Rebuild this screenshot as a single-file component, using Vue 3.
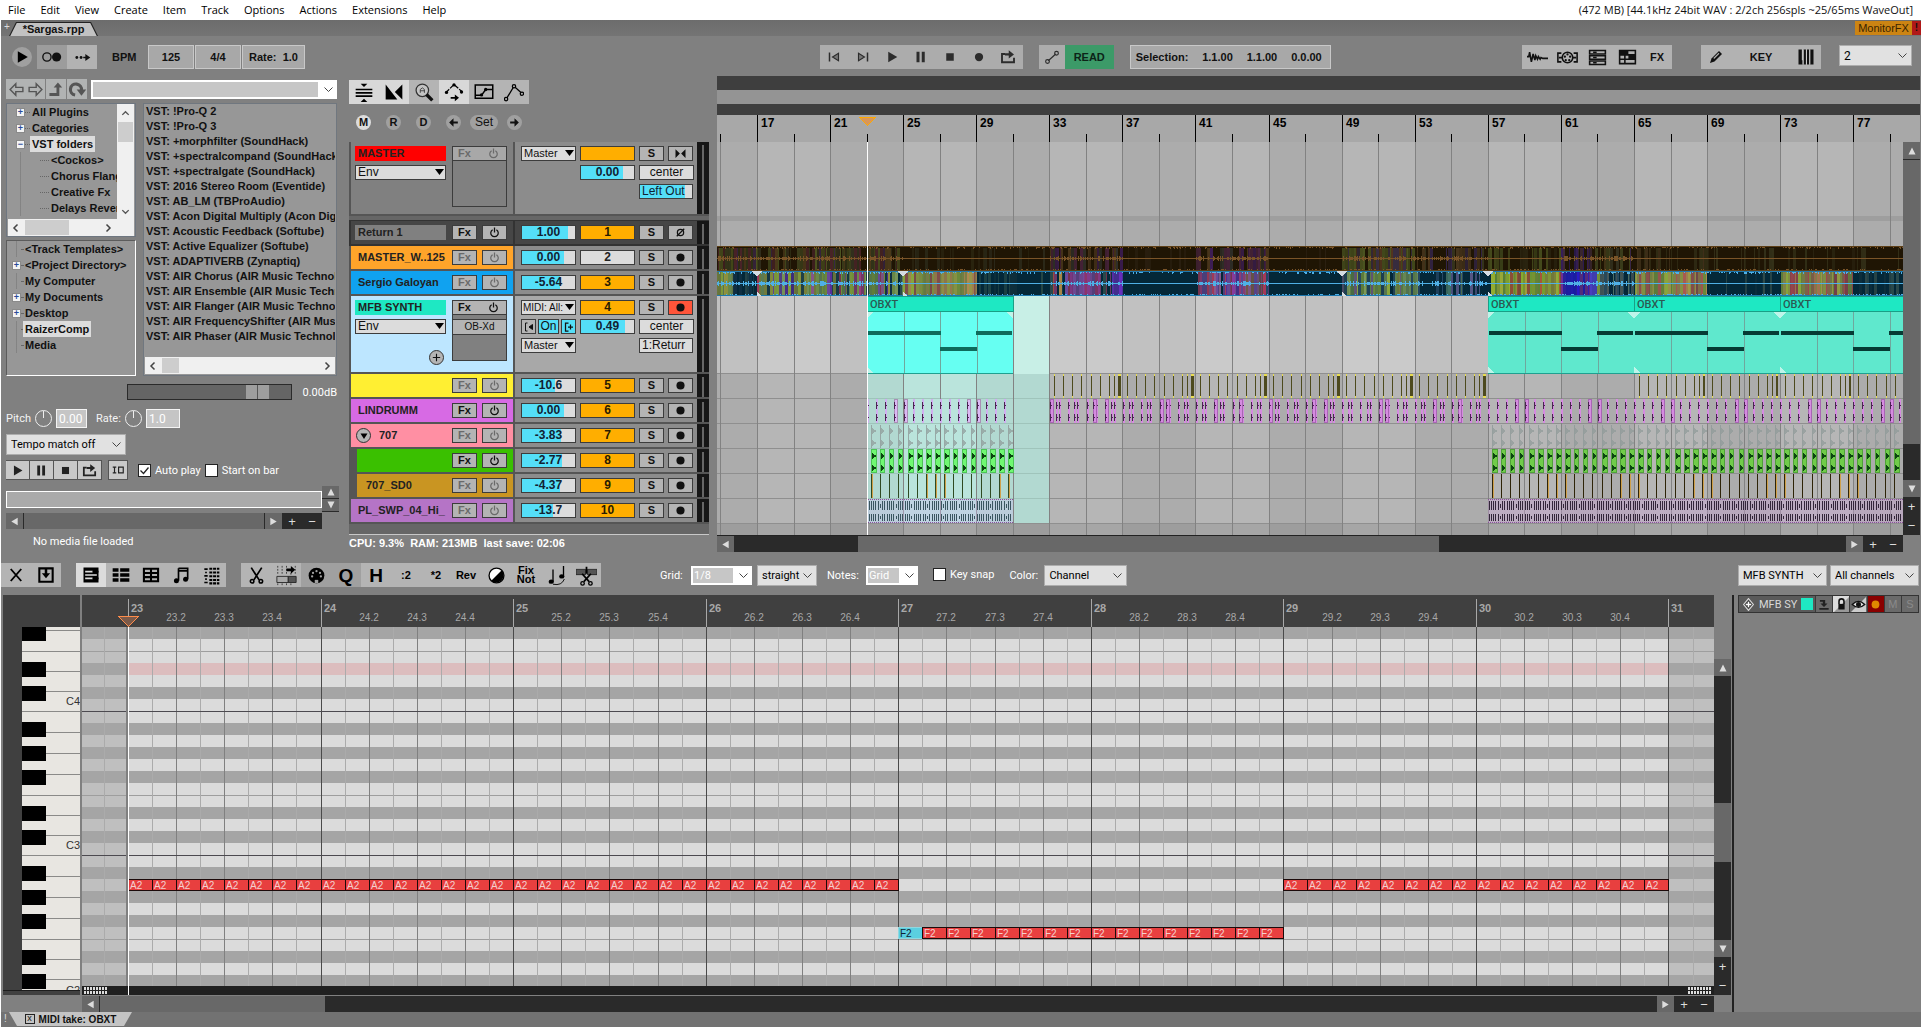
<script setup>
import { h, ref } from 'vue'

/* ---------- icons ---------- */
const icons = {
  play: '<path d="M7 5l12 7-12 7z"/>',
  pause: '<path d="M6 5h4v14H6zM13 5h4v14h-4z"/>',
  stop: '<path d="M7 7h10v10H7z"/>',
  rec: '<circle cx="12" cy="12" r="5.500"/>',
  start: '<path d="M5 6h2v12H5z"/><path d="M18 7v10l-8-5z" fill="#777" stroke="currentColor" stroke-width="1.500"/>',
  end: '<path d="M17 6h2v12h-2z"/><path d="M6 7v10l8-5z" fill="#777" stroke="currentColor" stroke-width="1.500"/>',
  loop: '<path d="M8 8H4v11h16v-6" fill="none" stroke="currentColor" stroke-width="2.500"/><path d="M8 7h5V3l7 5.500-7 5.500v-4H8z"/>',
  link: '<circle cx="6.500" cy="12" r="4.500" fill="none" stroke="currentColor" stroke-width="1.500"/><circle cx="17" cy="12" r="5"/>',
  dots: '<circle cx="4" cy="12" r="2"/><circle cx="10" cy="12" r="2"/><path d="M13 11h3V7l7 5-7 5v-4h-3z"/>',
  node: '<path d="M7 17L17 8" stroke="currentColor" stroke-width="1.500"/><circle cx="6" cy="18" r="2.500" fill="none" stroke="currentColor" stroke-width="1.500"/><circle cx="18" cy="7" r="2.500" fill="none" stroke="currentColor" stroke-width="1.500"/>',
  wave: '<path d="M0 11h2l1-5 2 11 2-9 2 7 1-5 2 4 1-3 2 3 1-2 2 1h6" fill="none" stroke="currentColor" stroke-width="1.800"/>',
  router: '<circle cx="12" cy="12" r="6" fill="none" stroke="currentColor" stroke-width="1.800"/><path d="M5 7H1v10h4M19 7h4v10h-4" fill="none" stroke="currentColor" stroke-width="1.800"/><circle cx="12" cy="8.500" r="1.300"/><circle cx="9" cy="11" r="1.300"/><circle cx="15" cy="11" r="1.300"/><circle cx="10" cy="15" r="1.300"/><circle cx="14" cy="15" r="1.300"/><path d="M2 12h4M18 12h4" stroke="currentColor" stroke-width="2"/>',
  rows: '<path d="M3 4h18v4H3zM3 10h18v4H3zM3 16h18v4H3z" fill="none" stroke="currentColor" stroke-width="1.800"/><path d="M7 6h4M7 12h4M7 18h4" stroke="currentColor" stroke-width="1.500"/>',
  matrix: '<path d="M3 4h18v15H3zM3 9h18M3 14h18M9 9v10" fill="none" stroke="currentColor" stroke-width="1.800"/><path d="M3 4h10v5H3zM13 9h8v5h-8z"/>',
  pencil: '<path d="M4 20l2-6L16 4l4 4L10 18z"/><path d="M9 14l7-7" stroke="#b2b2b2" stroke-width="1.500"/>',
  piano: '<path d="M3 3h4v13h1v5H3zM9 3h3v18H9zM13 3h3v18h-3zM17 3h4v18h-4z"/><path d="M8.500 3v18M12.500 3v18M16.500 3v18" stroke="#ddd" stroke-width="1"/>',
  power: '<path d="M9 7.500a6 6 0 1 0 6 0M12 4v8" fill="none" stroke="currentColor" stroke-width="2"/>',
  phase: '<circle cx="12" cy="12" r="5" fill="none" stroke="currentColor" stroke-width="2"/><path d="M6 18L18 6" stroke="currentColor" stroke-width="2"/>',
  mono: '<path d="M4 5l7 7-7 7zM20 5l-7 7 7 7z"/>',
  dot: '<circle cx="12" cy="12" r="6.500"/>',
  ripple: '<path d="M2 8h20v2H2zM2 12h20v2H2zM2 16h20v2H2zM8 2h8l-4 4zM8 24h8l-4-4z"/>',
  cross: '<path d="M2 3v18h14zM22 3v18L13 12z"/>',
  zoomA: '<circle cx="10" cy="10" r="7.500" fill="#c4c4c4" stroke="#333" stroke-width="1.500"/><path d="M15 15L22 22" stroke="#111" stroke-width="4"/><path d="M7.500 13V9l2.500-2 2.500 2v4M7.500 10.500h5" fill="none" stroke="#333"/>',
  envMove: '<path d="M2 13l10-10 10 9" fill="none" stroke="currentColor" stroke-width="1.500" stroke-dasharray="6 1.500"/><circle cx="3" cy="12.500" r="2"/><circle cx="12" cy="3.500" r="2"/><circle cx="21" cy="12" r="2"/><path d="M8 18h5v-3l5 4-5 4v-3H8z"/>',
  envBox: '<path d="M1.500 3.500h21v16h-21zM2 16h7l5-7h8" fill="none" stroke="currentColor" stroke-width="1.800"/><circle cx="9" cy="15.500" r="2"/><circle cx="14" cy="9" r="2"/>',
  envLine: '<path d="M3 20l9-15 10 9" fill="none" stroke="currentColor" stroke-width="1.500"/><g fill="#b4b4b4" stroke="currentColor" stroke-width="1.500"><circle cx="2.500" cy="20.500" r="2"/><circle cx="12" cy="5" r="2"/><circle cx="21.500" cy="14" r="2"/></g>',
  left: '<path d="M12 4v6h8v4h-8v6L4 12z"/>',
  right: '<path d="M12 4v6H4v4h8v6l8-8z"/>',
  back: '<path d="M11 4v5h10v6H11v5l-8-8z" fill="none" stroke="currentColor" stroke-width="2"/>',
  fwd: '<path d="M13 4v5H3v6h10v5l8-8z" fill="none" stroke="currentColor" stroke-width="2"/>',
  up: '<path d="M2 17h10V9H8l6-7 6 7h-4v12H2z"/>',
  refresh: '<path d="M9 19a7 7 0 1 1 8-6" fill="none" stroke="currentColor" stroke-width="4"/><path d="M11 12h12l-6 8z"/>',
  plus: '<path d="M12 4v16M4 12h16" stroke="currentColor" stroke-width="2.500"/>',
  down: '<path d="M5 7h14l-7 11z"/>',
  close: '<path d="M5 4l14 16M19 4L5 20" stroke="currentColor" stroke-width="2.500"/>',
  dock: '<path d="M4 4h16v16H4z" fill="none" stroke="currentColor" stroke-width="2.500"/><path d="M10.500 4h3v6H17l-5 6-5-6h3.500z"/>',
  list1: '<path d="M3 3h18v18H3z"/><path d="M5 7h9v2H5zM5 11h14v2H5zM5 15h9v2H5z" fill="#dcdcdc"/><path d="M14 7h7v2h-7zM14 15h7v2h-7z"/>',
  list2: '<path d="M2 4h7v4H2zM11 4h11v4H11zM2 10h7v4H2zM11 10h11v4H11zM2 16h7v4H2zM11 16h11v4H11z"/>',
  table: '<path d="M3.500 4.500h17v15h-17zM4 9.500h16M4 14.500h16M12 5v14" fill="none" stroke="currentColor" stroke-width="2.500"/>',
  notes: '<path d="M9 4h11v13M9 4v15M9 7h11" fill="none" stroke="currentColor" stroke-width="2"/><circle cx="6.500" cy="19" r="3"/><circle cx="17.500" cy="17" r="3"/>',
  drums: '<path d="M4 4h4v2H4zM4 12h4v2H4zM4 20h4v2H4zM5 8h2v2H5zM5 16h2v2H5z"/><path d="M10 4.500h12M10 9h12M10 13.500h12M10 18h12M10 22h12" stroke="currentColor" stroke-width="2.500" stroke-dasharray="3.500 1"/>',
  cut: '<path d="M6 3l9 14M18 3L9 17" stroke="currentColor" stroke-width="2"/><circle cx="7" cy="18.500" r="2" fill="none" stroke="currentColor" stroke-width="1.800"/><circle cx="17" cy="18.500" r="2" fill="none" stroke="currentColor" stroke-width="1.800"/>',
  quant: '<path d="M1 13h13v7H1z" fill="#aaa" stroke="#222"/><path d="M14 13h9v7h-9z" fill="#555" stroke="#222"/><path d="M2 1v9M7 1v9M12 1v9M17 9v3M22 1v9M2 21v3M7 21v3M12 21v3M17 21v3" stroke="#333" stroke-dasharray="2 1.500"/><path d="M12 4h5V1l5 4.500-5 4.500V7h-5z"/>',
  midi: '<circle cx="12" cy="12" r="9"/><g fill="#a0a0a0"><circle cx="12" cy="7" r="1.300"/><circle cx="8" cy="9" r="1.300"/><circle cx="16" cy="9" r="1.300"/><circle cx="7" cy="13" r="1.300"/><circle cx="17" cy="13" r="1.300"/><path d="M10 17h4v4h-4z"/></g>',
  half: '<circle cx="12" cy="12" r="8.500" fill="#fff" stroke="#000" stroke-width="1.500"/><path d="M6 18A8.500 8.500 0 0 0 18 6z"/>',
  legato: '<path d="M8 5v14M20 1v12" stroke="currentColor" stroke-width="1.500"/><ellipse cx="6" cy="19" rx="3" ry="2.500"/><ellipse cx="18" cy="13" rx="3" ry="2.500"/><path d="M8 22q10 2 13-6" fill="none" stroke="currentColor"/>',
  split: '<path d="M0 5h11v6H0zM13 5h11v6H13z" fill="#555" stroke="#222"/><path d="M7 10l8 9M17 10l-8 9M12 2v8" stroke="currentColor" stroke-width="2"/><circle cx="7.500" cy="21" r="2" fill="none" stroke="currentColor" stroke-width="1.500"/><circle cx="16.500" cy="21" r="2" fill="none" stroke="currentColor" stroke-width="1.500"/>',
  diamond: '<path d="M12 1l9 11-9 11L3 12z" fill="#444" stroke="#ddd" stroke-width="2"/><path d="M12 7v10M7 12h10" stroke="#fff" stroke-width="2.500"/>',
  into: '<path d="M5 5h9v6h4l-6 6-6-6h4V8H5zM4 19h16v3H4z" fill="#222"/>',
  lock: '<path d="M24 0v24H0z" fill="#999"/><path d="M8 11V7a4 4 0 0 1 8 0v4" fill="none" stroke="#111" stroke-width="2.500"/><path d="M7 11h10v9H7z" fill="#111"/>',
  eye: '<path d="M24 0v24H0z" fill="#ccc"/><path d="M2 12q10-10 20 0-10 9-20 0z" fill="#ddd" stroke="#111" stroke-width="2"/><circle cx="12" cy="12" r="4" fill="#111"/>',
  inp: '<path d="M9 4H5v16h4M19 7l-7 5 7 5z" fill="none" stroke="currentColor" stroke-width="2"/><path d="M19 7l-7 5 7 5z"/>',
  outp: '<path d="M11 4H5v16h6M10 12h10M15 7v10" fill="none" stroke="currentColor" stroke-width="2.500"/>',
  io: '<path d="M3 7h6M6 7v10M3 17h6M13 7h8v10h-8z" fill="none" stroke="currentColor" stroke-width="2"/>',
  tri: '<path d="M12 5l7 14H5z"/>',
  tridn: '<path d="M12 19L5 5h14z"/>',
  tril: '<path d="M5 12l14-8v16z"/>',
  trir: '<path d="M19 12L5 4v16z"/>',
  chu: '<path d="M5 15l7-7 7 7" fill="none" stroke="currentColor" stroke-width="3"/>',
  chd: '<path d="M5 9l7 7 7-7" fill="none" stroke="currentColor" stroke-width="3"/>',
  chl: '<path d="M15 5l-7 7 7 7" fill="none" stroke="currentColor" stroke-width="3"/>',
  chr: '<path d="M9 5l7 7-7 7" fill="none" stroke="currentColor" stroke-width="3"/>'
}
const Icon = (p) => h('svg', {
  viewBox: '0 0 24 24', width: p.s || 18, height: p.s || 18, fill: 'currentColor',
  'aria-hidden': 'true', class: 'icon', innerHTML: icons[p.n]
})
Icon.props = ['n', 's']

/* ---------- menus and browser ---------- */
const menu = ['File', 'Edit', 'View', 'Create', 'Item', 'Track', 'Options', 'Actions', 'Extensions', 'Help']
const transport = ['start', 'end', 'play', 'pause', 'stop', 'rec', 'loop']
const tree1 = [
  { t: 'All Plugins', b: '+' }, { t: 'Categories', b: '+' }, { t: 'VST folders', b: '-', sel: true },
  { t: '<Cockos>', sub: true }, { t: 'Chorus Flanger', sub: true }, { t: 'Creative Fx', sub: true }, { t: 'Delays Reverbs', sub: true }
]
const tree2 = [
  { t: '<Track Templates>' }, { t: '<Project Directory>', b: '+' }, { t: 'My Computer' },
  { t: 'My Documents', b: '+' }, { t: 'Desktop', b: '+' }, { t: 'RaizerComp', sel: true }, { t: 'Media' }
]
const plugins = [
  '!Pro-Q 2', '!Pro-Q 3', '+morphfilter (SoundHack)', '+spectralcompand (SoundHack)', '+spectralgate (SoundHack)',
  '2016 Stereo Room (Eventide)', 'AB_LM (TBProAudio)', 'Acon Digital Multiply (Acon Digital)', 'Acoustic Feedback (Softube)',
  'Active Equalizer (Softube)', 'ADAPTIVERB (Zynaptiq)', 'AIR Chorus (AIR Music Technology)', 'AIR Ensemble (AIR Music Technology)',
  'AIR Flanger (AIR Music Technology)', 'AIR FrequencyShifter (AIR Music Technology)', 'AIR Phaser (AIR Music Technology)'
]
const autoPlay = ref(true)
const startOnBar = ref(false)
const keySnap = ref(false)

/* ---------- tracks ---------- */
const tracks = [
  { n: 1, name: 'Return 1', c: '#464646', box: '#808080', fx: true, vol: '1.00', v: 86, ret: true },
  { n: 2, name: 'MASTER_W..125', c: '#ffa42a', vol: '0.00', v: 79, mute: true },
  { n: 3, name: 'Sergio Galoyan', c: '#10a2f0', vol: '-5.64', v: 71 },
  { n: 4, name: 'MFB SYNTH', c: '#bde6ff', box: '#1ee8c3', big: true, fx: true, vol: '0.49', v: 83 },
  { n: 5, name: '', c: '#ffef32', vol: '-10.6', v: 62 },
  { n: 6, name: 'LINDRUMM', c: '#d76ae4', fx: true, vol: '0.00', v: 79 },
  { n: 7, name: '707', c: '#ff8fa3', folder: true, vol: '-3.83', v: 73 },
  { n: 8, name: '', c: '#3ac000', child: true, fx: true, vol: '-2.77', v: 75 },
  { n: 9, name: '707_SD0', c: '#c99522', child: true, vol: '-4.37', v: 72 },
  { n: 10, name: 'PL_SWP_04_Hi_', c: '#b574c6', vol: '-13.7', v: 58 }
]

/* ---------- arrangement ---------- */
const bx = (bar) => 757 + Math.round((bar - 17) * 18.27)
const labels = []
for (let b = 17; b <= 77; b += 4) labels.push({ b, x: bx(b) })
const lines = []
for (let b = 15; b <= 79; b += 2) lines.push({ x: bx(b), major: (b - 17) % 4 === 0 })
const stripes = []
for (let b = 17; b <= 77; b += 8) stripes.push({ x: bx(b), w: bx(b + 4) - bx(b) })
const laneLines = [373, 398, 423, 448, 473, 498, 523]

let seed = 7
const rnd = () => (seed = (seed * 16807) % 2147483647) / 2147483647
const G = ['#8aa63c', '#6f8f4a', '#95983f', '#7d9a5a'], P = ['#6b4a9a', '#9a3f7a', '#5a2f9a', '#8a5a8a', '#a83a5a']
const K = ['#123044', '#1b3c46', '#2c4a4c', '#06283a'], R = ['#b5523f', '#a0484f', '#b08a48', '#9a7a4a']
const paint = (y, segs) => {
  const out = []
  for (const [a, b, cols, d] of segs) {
    for (let x = a; x < b;) {
      const w = Math.min(1 + Math.floor(rnd() * 3), b - x)
      if (rnd() < d) out.push({ x, y, w, f: cols[Math.floor(rnd() * cols.length)], o: 0.65 + rnd() * 0.35 })
      x += w
    }
  }
  return out
}
const BO = ['#434a1c', '#3c3f1c', '#4b3a1a', '#33301f', '#3a2748'], BP = ['#4a2440', '#3c1d55', '#4a361c', '#30302a']
const brown = paint(248, [
  [717, 900, [...BO, '#4a2428', '#4d5420', '#33351a'], 0.85], [903, 1050, ['#2a2410', '#2c2a1a'], 0.25], [1050, 1123, BP, 0.7],
  [1123, 1196, ['#2a1f10'], 0.15], [1196, 1269, BP, 0.7], [1269, 1342, ['#2a1f10'], 0.2], [1342, 1415, ['#434a1c', '#4b5420', '#3a2f45', '#55361f'], 0.85],
  [1415, 1488, ['#3a3a22', '#33254a', '#46341c'], 0.6], [1488, 1561, ['#3a4018', '#454b1c', '#2a2410'], 0.6], [1561, 1592, ['#2b1a58', '#3a2066', '#402a3a'], 0.8],
  [1592, 1634, BO, 0.5], [1634, 1707, ['#332f16', '#40301a'], 0.45], [1707, 1903, ['#2a2410', '#333018'], 0.3]
])
const blue = paint(272, [
  [717, 733, [...G, '#8f9a4a'], 1], [733, 757, K, 0.7], [757, 890, [...G, ...G, ...P, '#2c4a4c', '#1b3c46'], 0.95], [890, 903, [...G, ...K], 0.7],
  [903, 977, ['#8f9a45', '#a09a4a', '#b08a50', '#a85a50', '#8aa63c'], 1], [977, 1050, ['#1f4346', '#33544c', '#10303c'], 0.4],
  [1050, 1070, [...R, ...P, ...K], 0.9], [1070, 1100, ['#9a3f9a', '#8a3a8a', '#b03a7a', '#7a4a9a'], 1], [1100, 1112, [...K, ...P], 0.8], [1112, 1123, ['#6a2fc0', '#5a2fb0'], 1],
  [1198, 1269, [...P, ...P, '#7a5a4a', '#a03fb0', '#244a66'], 0.95], [1342, 1415, [...G, ...G, ...G, '#6b5a7a', '#2a4a5c'], 0.95],
  [1415, 1488, ['#5a5a8a', '#4a7a6a', '#2a4a6a', '#6f8f5a', '#06283a', '#06283a'], 0.8], [1491, 1561, ['#8fb22f', '#9aac38', '#85ae34', '#a6a03c', '#b05a38', '#94b030'], 1],
  [1561, 1590, ['#2a1ad0', '#3a1fc0', '#2418d8', '#7a2f9a'], 1], [1590, 1600, ['#4a3fc0', '#8aa63c'], 1], [1600, 1634, ['#5a7a6a', '#2a4a5c', '#4a5a5a', '#06283a'], 0.7],
  [1635, 1707, ['#8f9a45', '#a09a4a', '#b08a50', '#a85a50', '#8aa63c'], 1], [1707, 1780, ['#10303c', '#2f4a4a'], 0.3],
  [1781, 1853, ['#8f9a45', '#a09a4a', '#b07a50', '#a84a50', '#8aa63c'], 1], [1853, 1903, ['#10303c', '#2f4a4a', '#2a4a4c'], 0.5]
])
const quiet = [[903, 1050], [1123, 1196], [1269, 1342], [1488, 1561], [1634, 1903]]
const wave = (mid, amp) => {
  let d = ''
  for (let x = 717; x < 1903; x++) {
    const q = quiet.some(([a, b]) => x >= a && x < b)
    const a = Math.max(1, Math.round(rnd() * (q ? 1 : amp)))
    d += `M${x} ${mid - a + 1}h1v${a * 2 - 1}h-1z`
  }
  return d
}
const edge = (y, y2) => {
  let d = ''
  for (let x = 717; x < 1903; x++) {
    if (rnd() < 0.3) d += `M${x} ${y}h1v${rnd() < 0.3 ? 2 : 1}h-1z`
    if (rnd() < 0.3) d += `M${x} ${y2}h1v1h-1z`
  }
  return d
}
const brownWave = wave(258, 3) + edge(247, 269)
const blueWave = wave(283, 3) + edge(272, 294)
const splits = [757, 903, 1342, 1488]

const clips = [
  { x: 867, w: 146, sel: true }, { x: 1488, w: 146 }, { x: 1634, w: 146 }, { x: 1780, w: 146 }
]
const hits = []
for (const [a, n, sel] of [[867, 16, true], [1488, 46, false]]) {
  for (let k = 0; k < n; k++) {
    const m = k % 16
    hits.push({ x: a + 4 + Math.round(k * 9.13), sel, w: [0, 4, 5, 6, 7, 8, 12, 13, 14, 15].includes(m) ? 6 : 5, gold: [0, 6, 7, 8, 14, 15].includes(m) })
  }
}
const triPath = (y) => hits.map((t) => {
  const w = t.w - 2
  return [y, y + 12].map((c) => `M${t.x + 1} ${c - 3}h1v1h1v1h${w - 2}v2h-${w - 2}v1h-1v1h-1z`).join('')
}).join('')
const greyTris = triPath(431)
const greenTris = triPath(456)
const yellow = []
for (const [a, n] of [[1049, 48], [1634, 29]]) {
  for (let k = 0; k < n; k++) {
    const x = a + 5 + Math.round(k * 9.13)
    yellow.push({ x, w: 1 })
    if (k % 8 === 7) yellow.push({ x: x - 4, w: 1 }, { x: x + 1, w: a === 1049 ? 2 : 1 })
  }
}
const pink = []
for (let k = 0; k < 16; k++) pink.push({ x: 867 + Math.round(k * 9.13), sel: true, box: k === 3 || k === 4 || k === 11 || k === 12 })
for (let k = 0; k < 48; k++) {
  const x = 1050 + Math.round(k * 9.13)
  pink.push({ x, box: k % 6 === 0 })
  if (k % 2) pink.push({ x: x - 3, box: k % 8 === 5 })
}
for (let k = 0; k < 46; k++) pink.push({ x: 1488 + Math.round(k * 9.13), box: [3, 4, 11, 12].includes(k % 16) })
const hats = (a, b) => {
  let d = ''
  for (let x = a, k = 0; x < b; x += k % 4 === 3 ? 3 : 2, k++) {
    const s = k % 7 === 5
    d += s ? `M${x} 504h1v4h-1zM${x} 516h1v3h-1z` : `M${x} 501h1v9h-1zM${x} 514h1v7h-1z`
  }
  return d
}
const hatSel = hats(869, 1012), hatRest = hats(1489, 1903)

/* ---------- piano roll ---------- */
const rx = (half) => 128 + Math.round(half * 24.07)
const blacks = [1, 3, 6, 8, 10]
const rows = []
for (let p = 66; p > 36; p--) rows.push({ p, y: 699 + (60 - p) * 12, black: blacks.includes(p % 12) })
const blackKeys = rows.filter((r) => r.black)
const whiteLines = [630, 651, 671, 691, 711, 732, 753, 774, 795, 815, 835, 855, 876, 897, 918, 939, 959, 979]
const rollLines = []
for (let i = -1; i <= 65; i++) rollLines.push({ x: rx(i), k: i % 8 === 0 ? 'measure' : i % 2 === 0 ? 'beat' : 'eighth' })
const measures = []
for (let m = 23; m <= 31; m++) measures.push({ m, x: rx((m - 23) * 8) })
const beats = []
for (let m = 23; m <= 30; m++) for (let b = 2; b <= 4; b++) beats.push({ t: `${m}.${b}`, x: rx((m - 23) * 8 + (b - 1) * 2) })
const notes = []
for (let i = 0; i < 64; i++) {
  const f = i >= 32 && i < 48
  notes.push({ x: rx(i), w: rx(i + 1) - rx(i), y: f ? 927 : 879, t: f ? 'F2' : 'A2', sel: i === 32 })
}
const gridTools = [
  { i: 'cut' }, { i: 'quant' }, { i: 'midi', d: 1 }, { t: 'Q', d: 1, big: 1 }, { t: 'H', big: 1 }, { t: ':2' }, { t: '*2' }, { t: 'Rev' },
  { i: 'half' }, { t: 'Fix Not', two: 1 }, { i: 'legato' }, { i: 'split' }
]
</script>

<template>
  <div class="app">
    <nav class="menu">
      <a v-for="m in menu" :key="m" href="#">{{ m }}</a>
      <span class="audio">(472 MB) [44.1kHz 24bit WAV : 2/2ch 256spls ~25/65ms WaveOut]</span>
    </nav>

    <div class="tabs">
      <span class="add">+</span>
      <button class="tab"><span>*Sargas.rpp</span></button>
      <span class="fill"></span>
      <button class="monitor">MonitorFX</button><span class="alert">!</span>
    </div>

    <header class="transport">
      <div class="tgroup first">
        <button class="round" aria-label="Play"><Icon n="play" s="20" /></button>
        <button class="tb dark" aria-label="Link"><Icon n="link" s="22" /></button>
        <button class="tb" aria-label="Follow"><Icon n="dots" s="17" /></button>
      </div>
      <label class="bpm" for="bpm">BPM</label>
      <input id="bpm" class="field w46" value="125">
      <input class="field w46" aria-label="Time signature" value="4/4">
      <button class="field w63">Rate:&nbsp; 1.0</button>
      <span class="before"></span>
      <div class="tgroup">
        <button v-for="t in transport" :key="t" class="tb mid" :aria-label="t"><Icon :n="t" s="18" /></button>
      </div>
      <div class="tgroup auto">
        <button class="tb mid" aria-label="Envelope"><Icon n="node" s="18" /></button>
        <button class="read">READ</button>
      </div>
      <button class="field sel"><span>Selection:</span><span>1.1.00</span><span>1.1.00</span><span>0.0.00</span></button>
      <span class="after"></span>
      <div class="tgroup views">
        <button v-for="t in ['wave', 'router', 'rows', 'matrix']" :key="t" class="tb" :aria-label="t"><Icon :n="t" s="21" /></button>
        <button class="tb">FX</button>
      </div>
      <div class="tgroup keys">
        <button class="tb" aria-label="Draw"><Icon n="pencil" s="18" /></button>
        <button class="tb wide">KEY</button>
        <button class="tb" aria-label="Piano"><Icon n="piano" s="20" /></button>
      </div>
      <select class="combo num" aria-label="Channels"><option>2</option></select>
    </header>

    <main class="top">
      <!-- media explorer -->
      <section class="explorer">
        <div class="nav">
          <button class="nb pair" aria-label="Back and forward"><Icon n="back" s="17" /><Icon n="fwd" s="17" /></button>
          <button class="nb" aria-label="Up"><Icon n="up" s="17" /></button>
          <button class="nb" aria-label="Refresh"><Icon n="refresh" s="19" /></button>
          <select class="path" aria-label="Path"><option></option></select>
        </div>
        <div class="lists">
          <div class="trees">
            <div class="tree one">
              <ul>
                <li v-for="r in tree1" :key="r.t" :class="{ sub: r.sub }">
                  <i v-if="r.b" class="box">{{ r.b === '+' ? '+' : '−' }}</i><i v-else class="nobox"></i><span class="ln"></span><span :class="{ on: r.sel }">{{ r.t }}</span>
                </li>
              </ul>
              <div class="vs"><Icon n="chu" s="11" /><b></b><Icon n="chd" s="11" /></div>
              <div class="hs"><Icon n="chl" s="12" /><b></b><span class="fill"></span><Icon n="chr" s="12" /></div>
            </div>
            <div class="tree two">
              <ul>
                <li v-for="r in tree2" :key="r.t">
                  <i v-if="r.b" class="box">+</i><i v-else class="nobox"></i><span class="ln"></span><span :class="{ on: r.sel }">{{ r.t }}</span>
                </li>
              </ul>
            </div>
          </div>
          <div class="plugins">
            <ul><li v-for="p in plugins" :key="p">VST: {{ p }}</li></ul>
            <div class="hs"><Icon n="chl" s="12" /><b></b><span class="fill"></span><Icon n="chr" s="12" /></div>
          </div>
        </div>
        <div class="volrow"><input type="range" min="0" max="100" value="84" aria-label="Volume"><span>0.00dB</span></div>
        <div class="pitch">
          <label for="pitch">Pitch</label><i class="knob"></i><input id="pitch" value="0.00">
          <label class="rate" for="rate">Rate:</label><i class="knob"></i><input id="rate" class="r" value="1.0">
        </div>
        <select class="combo tempo" aria-label="Tempo match"><option>Tempo match off</option></select>
        <div class="prev">
          <button v-for="t in ['play', 'pause', 'stop', 'loop']" :key="t" :aria-label="t"><Icon :n="t" s="17" /></button>
          <button class="io" aria-label="IO"><Icon n="io" s="14" /></button>
          <label class="ck"><input v-model="autoPlay" type="checkbox">Auto play</label>
          <label class="ck two"><input v-model="startOnBar" type="checkbox">Start on bar</label>
        </div>
        <div class="scrub">
          <div class="media"></div>
          <div class="spin"><button aria-label="Up"><Icon n="tri" s="12" /></button><button aria-label="Down"><Icon n="tridn" s="12" /></button></div>
        </div>
        <div class="bar left"><button aria-label="Left"><Icon n="tril" s="11" /></button><span class="thumb fill"></span><button aria-label="Right"><Icon n="trir" s="11" /></button><button class="pm">+</button><button class="pm">−</button></div>
        <p class="nomedia">No media file loaded</p>
      </section>

      <!-- track control panel -->
      <section class="tcp">
        <div class="tools">
          <button v-for="(t, i) in ['ripple', 'cross', 'zoomA', 'envMove', 'envBox', 'envLine']" :key="t" :class="{ on: [0, 1, 3].includes(i) }" :aria-label="t"><Icon :n="t" s="20" /></button>
        </div>
        <div class="pills">
          <button class="on">M</button><button>R</button><button>D</button><button aria-label="Previous"><Icon n="left" s="13" /></button><button class="set">Set</button><button aria-label="Next"><Icon n="right" s="13" /></button>
        </div>
        <div class="panel">
          <div class="trk master">
            <div class="lc">
              <div class="names"><span class="nm boxed" style="--b: #f00">MASTER</span>
                <select class="env" aria-label="Master envelope"><option>Env</option></select></div>
              <div class="fxbox"><div class="hd off"><span>Fx</span><Icon n="power" s="15" /></div></div>
            </div>
            <div class="rc">
              <div class="ln4"><select class="env out" aria-label="Master output"><option>Master</option></select><button class="cell num" aria-label="Mute"></button><button class="cell sm">S</button><button class="cell sm" aria-label="Mono"><Icon n="mono" s="15" /></button></div>
              <div class="ln4 end"><button class="cell vol" style="--v: 79%">0.00</button><button class="cell pan">center</button></div>
              <div class="ln4 end"><button class="cell route vol" style="--v: 87%">Left Out</button></div>
            </div>
            <div class="meter"></div>
          </div>
          <div class="gapline"></div>
          <div v-for="t in tracks" :key="t.n" class="trk" :class="{ big: t.big, ret: t.ret, child: t.child }">
            <div class="lc" :style="{ background: t.c }">
              <div class="names">
                <span class="nm" :class="{ boxed: t.box }" :style="{ '--b': t.box }"><i v-if="t.folder" class="fold"><Icon n="down" s="12" /></i>{{ t.name }}</span>
                <template v-if="t.big">
                  <select class="env" aria-label="Envelope"><option>Env</option></select>
                  <button class="addfx" aria-label="Add"><Icon n="plus" s="11" /></button>
                </template>
              </div>
              <div v-if="t.big" class="fxbox"><div class="hd"><span>Fx</span><Icon n="power" s="15" /></div><div class="ob">OB-Xd</div></div>
              <template v-else>
                <button class="cell sm" :class="{ off: !t.fx }">Fx</button>
                <button class="cell sm pw" :class="{ off: !t.fx }" aria-label="Power"><Icon n="power" s="15" /></button>
              </template>
            </div>
            <div class="rc">
              <template v-if="t.big">
                <div class="ln4"><select class="env midi" aria-label="MIDI input"><option>MIDI: All:</option></select><button class="cell num">4</button><button class="cell sm">S</button><button class="cell sm armed" aria-label="Record"><Icon n="dot" s="15" /></button></div>
                <div class="ln4"><div class="io3"><button class="cell" aria-label="In"><Icon n="inp" s="12" /></button><button class="cell cy">On</button><button class="cell cy" aria-label="Out"><Icon n="outp" s="12" /></button></div><button class="cell vol" :style="{ '--v': t.v + '%' }">{{ t.vol }}</button><button class="cell pan">center</button></div>
                <div class="ln4 spread"><select class="env out" aria-label="Output"><option>Master</option></select><button class="cell route">1:Returr</button></div>
              </template>
              <div v-else class="ln4"><button class="cell vol" :style="{ '--v': t.v + '%' }">{{ t.vol }}</button><button class="cell num" :class="{ muted: t.mute }">{{ t.n }}</button><button class="cell sm">S</button><button class="cell sm" aria-label="Record"><Icon :n="t.ret ? 'phase' : 'dot'" :s="15" /></button></div>
            </div>
            <div class="meter"></div>
          </div>
        </div>
        <p class="cpu">CPU: 9.3%&nbsp; RAM: 213MB&nbsp; last save: 02:06</p>
      </section>

      <!-- arrange view -->
      <section class="arrange">
        <div class="strip d1"></div><div class="strip l1"></div><div class="strip d2"></div>
        <svg class="ruler" height="27">
          <g transform="translate(-717,-115)" shape-rendering="crispEdges">
            <rect v-for="l in lines" :key="l.x" :x="l.x" :y="l.major ? 115 : 134" width="1" :height="l.major ? 27 : 8" />
            <text v-for="l in labels" :key="l.b" :x="l.x + 4" y="127">{{ l.b }}</text>
            <path d="M859.500 117.500h16l-8 8z" fill="#d8965a" stroke="#ffa800" />
          </g>
        </svg>
        <div class="lanes">
          <svg class="field-svg" height="393">
            <g transform="translate(-717,-142)" shape-rendering="crispEdges">
              <rect x="717" y="142" width="3000" height="393" fill="#acacac" />
              <rect x="717" y="296" width="3000" height="78" fill="#c1c1c1" />
              <rect x="717" y="523" width="3000" height="12" fill="#9d9d9d" />
              <template v-for="s in stripes" :key="s.x">
                <rect :x="s.x" y="142" :width="s.w" height="381" fill="#b6b6b6" />
                <rect :x="s.x" y="296" :width="s.w" height="78" fill="#cacaca" />
                <rect :x="s.x" y="523" :width="s.w" height="12" fill="#a6a6a6" />
              </template>
              <rect x="717" y="216" width="3000" height="5" fill="#000" opacity=".08" />
              <rect v-for="y in laneLines" :key="y" x="717" :y="y" width="3000" height="1" fill="#8f8f8f" />
              <rect x="867" y="296" width="182" height="78" fill="#c8efe6" />
              <rect x="867" y="374" width="182" height="149" fill="#b2d9d1" />
              <rect x="903" y="374" width="73" height="149" fill="#bae4dc" />
              <rect v-for="y in laneLines.slice(1, -1)" :key="'s' + y" x="867" :y="y" width="182" height="1" fill="#9fc4bb" />
              <rect v-for="l in lines" :key="l.x" :x="l.x" y="142" width="1" height="393" fill="#828282" />

              <rect x="717" y="246" width="1186" height="25" fill="#1f1504" />
              <rect v-for="(s, i) in brown" :key="'b' + i" :x="s.x" :y="s.y" :width="s.w" height="22" :fill="s.f" :opacity="s.o" />
              <path :d="brownWave" fill="#7a5428" />
              <path d="M717 246h1186v1h-1186zM717 270h1186v1h-1186z" fill="#5c3f17" />
              <rect x="717" y="271" width="1186" height="25" fill="#042838" />
              <rect v-for="(s, i) in blue" :key="'u' + i" :x="s.x" :y="s.y" :width="s.w" height="23" :fill="s.f" :opacity="s.o" />
              <path :d="blueWave" fill="#4fb0e6" />
              <path d="M717 271h1186v1h-1186zM717 295h1186v1h-1186z" fill="#1d78ae" />
              <path v-for="x in splits" :key="x" :d="`M${x - 5} 271h10l-5 6zM${x} 291l4 5h-4z`" fill="#d5dde2" />

              <g v-for="c in clips" :key="c.x">
                <rect :x="c.x" y="312" :width="c.w" height="61" :fill="c.sel ? '#66fff2' : '#5fe8cd'" />
                <rect v-for="k in 3" :key="k" :x="c.x + Math.round(k * 36.5)" y="312" width="1" height="61" fill="#6fa79d" />
                <rect :x="c.x" y="373" :width="c.w" height="1" fill="#1fa090" />
                <rect :x="c.x + 0.500" y="296.500" :width="c.w" height="15" fill="#1ee8c3" stroke="#1a9f86" />
                <path :d="`M${c.x + 1} 331h73v4h-73zM${c.x + 73} 347h37v4h-37zM${c.x + 109} 331h36v4h-36z`" :fill="c.sel ? '#0e6b5c' : '#063b34'" />
                <path :d="`M${c.x} 312h6l-6 7zM${c.x + c.w} 312h-6l6 7zM${c.x} 367l6 6h-6z`" fill="#bff5ea" />
                <text class="clip" :x="c.x + 3" y="308">OBXT</text>
              </g>

              <g v-for="(t, i) in yellow" :key="'y' + i">
                <rect :x="t.x" y="374" :width="t.w" height="24" fill="#e8dc50" />
                <rect :x="t.x" y="376" :width="t.w" height="20" fill="#4d4a1e" />
              </g>
              <g v-for="(t, i) in pink" :key="'p' + i">
                <rect v-if="t.box" :x="t.x + 0.500" y="399.500" width="3" height="23" :fill="t.sel ? '#dcb8f5' : '#d58be0'" :stroke="t.sel ? '#a98fb5' : '#a866b4'" />
                <rect v-else :x="t.x" y="399" width="2" height="24" :fill="t.sel ? '#d0b0f0' : '#d58be0'" />
                <path :d="`M${t.x} 402h1v7h-1zM${t.x} 414h1v7h-1zM${t.x} 405h2v1h-2zM${t.x} 417h2v1h-2z`" fill="#4a2352" />
              </g>
              <path :d="greyTris" fill="#8f9a98" opacity=".7" />
              <g v-for="(t, i) in hits" :key="'h' + i">
                <rect :x="t.x" y="425" width="1" height="23" fill="#8f9a98" opacity=".8" />
                <rect :x="t.x + 0.500" y="449.500" :width="t.w - 1" height="23" :fill="t.sel ? '#70f872' : '#70cc4a'" :stroke="t.sel ? '#4cc456' : '#4fa238'" />
                <rect v-if="t.gold" :x="t.x + 1" y="474" width="1" height="24" fill="#cfa04a" />
                <rect :x="t.x" y="474" width="1" height="24" :fill="t.sel ? '#2f4a22' : '#2e2408'" />
              </g>
              <path :d="greenTris" fill="#0b4410" />
              <path d="M868 499h145v24h-145z" fill="#c9b8ea" opacity=".4" />
              <path d="M1488 499h415v24h-415z" fill="#c9a0d4" opacity=".4" />
              <path d="M868 499.500h145M868 522.500h145M1488 499.500h415M1488 522.500h415" stroke="#8a4f9c" stroke-dasharray="1 1" />
              <path :d="hatSel" fill="#3a5560" />
              <path :d="hatRest" fill="#33263a" />
              <rect x="867" y="142" width="1" height="393" fill="#fff" />
            </g>
          </svg>
          <div class="vbar"><button aria-label="Up"><Icon n="tri" s="12" /></button><span class="vthumb"></span><span class="fill"></span><button aria-label="Down"><Icon n="tridn" s="12" /></button><button class="pm">+</button><button class="pm">−</button></div>
        </div>
        <div class="bar arr"><button aria-label="Left"><Icon n="tril" s="11" /></button><span class="pre"></span><span class="thumb"></span><span class="fill"></span><button aria-label="Right"><Icon n="trir" s="11" /></button><button class="pm">+</button><button class="pm">−</button></div>
      </section>
    </main>

    <!-- MIDI editor -->
    <section class="editor">
      <div class="etools">
        <div class="tg"><button aria-label="Close"><Icon n="close" s="18" /></button><button aria-label="Dock"><Icon n="dock" s="20" /></button></div>
        <div class="tg g2"><button v-for="(t, i) in ['list1', 'list2', 'table', 'notes', 'drums']" :key="t" :class="{ on: !i }" :aria-label="t"><Icon :n="t" s="20" /></button></div>
        <div class="tg g3">
          <button v-for="(t, i) in gridTools" :key="i" :class="{ dk: t.d, big: t.big, two: t.two }" :aria-label="t.i || t.t"><Icon v-if="t.i" :n="t.i" s="21" /><template v-else>{{ t.t }}</template></button>
        </div>
        <label class="lb g" for="grid">Grid:</label>
        <select id="grid" class="combo hl w61"><option>1/8</option></select>
        <select class="combo w60" aria-label="Grid type"><option>straight</option></select>
        <label class="lb n" for="nl">Notes:</label>
        <select id="nl" class="combo hl w52"><option>Grid</option></select>
        <label class="ck snap"><input v-model="keySnap" type="checkbox">Key snap</label>
        <label class="lb c" for="color">Color:</label>
        <select id="color" class="combo w83"><option>Channel</option></select>
        <span class="fill"></span>
        <select class="combo w89" aria-label="Track"><option>MFB SYNTH</option></select>
        <select class="combo w89" aria-label="Channel"><option>All channels</option></select>
      </div>
      <div class="ebody">
        <div class="roll">
          <div class="rmain">
            <svg class="keyboard" width="79" height="400">
              <g transform="translate(-3,-595)" shape-rendering="crispEdges">
                <rect x="3" y="595" width="80" height="400" fill="#404040" />
                <rect x="22" y="627" width="58" height="363" fill="#e8e6e1" />
                <rect v-for="y in whiteLines" :key="y" x="22" :y="y" width="58" height="1" fill="#8a8a88" />
                <rect v-for="k in blackKeys" :key="k.p" x="22" :y="k.p === 66 ? 627 : k.y - 1" width="24" :height="k.p === 66 ? 14 : 15" fill="#000" />
                <text x="66" y="705">C4</text><text x="66" y="849">C3</text><text x="66" y="994">C2</text>
                <rect x="3" y="990" width="78" height="5" fill="#404040" />
                <rect x="3" y="990" width="78" height="1" fill="#1c1c1c" />
                <rect x="80" y="595" width="2" height="400" fill="#808080" />
              </g>
            </svg>
            <svg class="grid" height="400">
              <g transform="translate(-82,-595)" shape-rendering="crispEdges">
                <rect x="82" y="595" width="3000" height="32" fill="#404040" />
                <rect v-for="r in rows" :key="r.p" x="82" :y="r.y" width="3000" height="12" :fill="r.black ? '#a5a5a5' : '#dbdbdb'" />
                <rect x="128" y="663" width="1541" height="12" fill="#dcbdbe" />
                <g v-for="r in rows" :key="'d' + r.p">
                  <rect v-if="!r.black" x="82" :y="r.y" width="46" height="12" fill="#bfbfbf" />
                  <rect v-if="!r.black" x="1669" :y="r.y" width="2000" height="12" fill="#bfbfbf" />
                </g>
                <rect v-for="y in [651, 795, 939]" :key="y" x="82" :y="y" width="3000" height="1" fill="#9e9e9e" />
                <rect v-for="l in rollLines" :key="l.x" :class="l.k" :x="l.x" y="627" width="1" height="359" />
                <rect v-for="y in [711, 855]" :key="y" x="82" :y="y" width="3000" height="1" fill="#4c4a50" />
                <rect v-for="m in measures" :key="m.m" :x="m.x" y="599" width="1" height="28" fill="#a8a8a8" />
                <text v-for="m in measures" :key="'t' + m.m" class="ms" :x="m.x + 3" y="612">{{ m.m }}</text>
                <text v-for="b in beats" :key="b.t" class="bt" :x="b.x" y="621">{{ b.t }}</text>
                <g v-for="n in notes" :key="n.x">
                  <rect :x="n.x + 0.500" :y="n.y + 0.500" :width="n.w" height="11" :fill="n.sel ? '#5bcfe0' : '#e83f3f'" :stroke="n.sel ? '#8fd8e0' : '#1c0a0a'" />
                  <text class="nt" :class="{ sel: n.sel }" :x="n.x + 2" :y="n.y + 10">{{ n.t }}</text>
                </g>
                <rect x="82" y="986" width="3000" height="9" fill="#202020" />
                <path d="M84 988.500h24M84 992.500h24M1688 988.500h24M1688 992.500h24" stroke="#ddd" stroke-width="3" stroke-dasharray="2 1" />
                <rect x="126" y="627" width="2" height="359" fill="#808080" />
                <rect x="128" y="627" width="1" height="368" fill="#fff" />
                <path d="M118.500 616.500h20l-10 10z" fill="#7a5a4a" stroke="#ff8c4a" />
              </g>
            </svg>
            <div class="rv">
              <button aria-label="Up"><Icon n="tri" s="12" /></button><span class="a"></span><span class="b"></span><span class="fill"></span><button aria-label="Down"><Icon n="tridn" s="12" /></button><button class="pm">+</button><button class="pm">−</button>
            </div>
          </div>
          <div class="bar bot"><button aria-label="Left"><Icon n="tril" s="11" /></button><span class="thumb"></span><span class="fill"></span><button aria-label="Right"><Icon n="trir" s="11" /></button><button class="pm">+</button><button class="pm">−</button></div>
        </div>
        <aside class="tlist">
          <div class="trow">
            <Icon n="diamond" s="13" /><span class="tn">MFB SY</span><i class="sw"></i>
            <button aria-label="Into"><Icon n="into" s="14" /></button><button class="lt" aria-label="Lock"><Icon n="lock" s="15" /></button><button aria-label="Show"><Icon n="eye" s="15" /></button><button class="rd" aria-label="Record"><Icon n="rec" s="17" /></button><button class="fa">M</button><button class="fa">S</button>
          </div>
        </aside>
      </div>
    </section>

    <footer class="foot"><span class="add">!</span><button class="btab"><i>x</i><span>MIDI take: OBXT</span></button></footer>
  </div>
</template>

<style>
body { margin: 0; background: #808080; }
.icon { display: block; flex: none; }
</style>

<style scoped>
.app { min-height: 100vh; box-sizing: border-box; background: #808080; border-left: 1px solid #fff; font: bold 11px/15px "Liberation Sans", Arial, sans-serif; color: #111; overflow: hidden; }
.app *, .app *::before { box-sizing: border-box; }
button, input, select { font: inherit; color: inherit; border: 0; border-radius: 0; padding: 0; margin: 0; appearance: none; outline: none; }
button { display: flex; align-items: center; justify-content: center; background: none; white-space: nowrap; overflow: hidden; }
ul, p { margin: 0; padding: 0; list-style: none; }
i { font-style: normal; }
.fill { flex: 1; min-width: 0; }

.menu { display: flex; gap: 15px; height: 20px; padding: 0 8px 0 7px; background: #fff; font: 11px/19px "Open Sans", "Noto Sans", sans-serif; white-space: nowrap; }
.menu a { color: #000; text-decoration: none; }
.audio { margin-left: auto; }

.tabs { display: flex; height: 16px; background: linear-gradient(#6c6c6c, #747474); }
.add { width: 8px; padding-left: 3px; color: #ddd; font-size: 10px; line-height: 14px; font-weight: normal; }
.tab { width: 89px; height: 14px; margin-top: 2px; background: #222; clip-path: polygon(0 100%, 7px 0, 82px 0, 100% 100%); }
.tab span { display: block; width: 89px; height: 14px; margin-top: 1px; line-height: 12px; background: #c2c2c2; clip-path: polygon(1px 100%, 8px 0, 81px 0, 88px 100%); }
.monitor { width: 57px; height: 14px; margin-top: 1px; background: #cc8413; color: #3a2400; font-weight: normal; }
.alert { width: 9px; height: 14px; margin-top: 1px; background: #b01818; color: #111; font-size: 10px; line-height: 14px; text-align: center; }

.transport { display: flex; height: 40px; padding: 9px 9px 0 11px; }
.transport > * { height: 24px; }
.before { flex: 27; }
.after { flex: 10; }
.tgroup { display: flex; }
.round { width: 20px; height: 20px; margin: 2px 5px 0 0; border-radius: 50%; background: #a0a0a0; color: #000; }
.tb { width: 30px; height: 24px; background: #b2b2b2; }
.tb.dark { background: #9c9c9c; }
.tb.mid { width: 29px; background: #acacac; color: #2c2c2c; }
.tb.wide { width: 60px; }
.bpm { width: 51px; padding-left: 15px; line-height: 24px; }
.field { margin-right: 1px; background: #a8a8a8; border: 1px solid #c8c8c8; text-align: center; }
.w46 { width: 46px; }
.w63 { width: 63px; }
.auto { margin: 0 16px; }
.auto .tb { width: 26px; }
.read { width: 49px; background: #3c9a68; color: #0c2418; }
.sel { width: 201px; justify-content: space-between; padding: 0 8px 0 5px; }
.views { margin-right: 29px; }
.keys { margin-right: 18px; }
.num.combo { width: 73px; font-size: 12px; background-color: #e1e1e1; }

.combo { height: 21px; padding: 0 15px 0 4px; border: 1px solid #adadad; background: #e1e1e1 url("data:image/svg+xml,%3Csvg xmlns='http://www.w3.org/2000/svg' width='9' height='6'%3E%3Cpath d='M.5.5l4 4 4-4' fill='none' stroke='%23444'/%3E%3C/svg%3E") no-repeat right 4px center; font: 11px Roboto, sans-serif; color: #000; }
.combo.hl { height: 19px; margin-top: 1px; border: 0; padding: 0 20px 0 3px; color: #fff; background-color: #fff; background-image: url("data:image/svg+xml,%3Csvg xmlns='http://www.w3.org/2000/svg' width='9' height='6'%3E%3Cpath d='M.5.5l4 4 4-4' fill='none' stroke='%23444'/%3E%3C/svg%3E"), linear-gradient(#c6c6c6, #c6c6c6); background-position: right 4px center, 2px 2px; background-size: 9px 6px, calc(100% - 21px) calc(100% - 4px); background-repeat: no-repeat; }

.top { display: grid; grid-template-columns: 348px 368px minmax(0, 1fr); }

/* explorer */
.explorer { padding: 3px 12px 0 5px; }
.nav { display: flex; gap: 1px; height: 20px; }
.nb { width: 20px; height: 20px; background: #b1b3b3; color: #555; }
.nb.pair { width: 39px; gap: 2px; }
.path { flex: 1; height: 19px; margin: 1px 0 0 3px; background: url("data:image/svg+xml,%3Csvg xmlns='http://www.w3.org/2000/svg' width='9' height='6'%3E%3Cpath d='M.5.5l4 4 4-4' fill='none' stroke='%23444'/%3E%3C/svg%3E") no-repeat right 4px center, linear-gradient(#c6c6c6, #c6c6c6) no-repeat 2px 2px / calc(100% - 21px) 15px, #fff; }
.lists { display: flex; justify-content: space-between; margin-top: 4px; height: 273px; }
.tree { width: 130px; border: 1px solid #6e7680; background: #979797; overflow: hidden; }
.tree.one { display: grid; grid-template-columns: 1fr 17px; height: 134px; padding: 0 1px 1px; }
.tree.one ul { height: 115px; overflow: hidden; }
.tree.two { height: 136px; margin-top: 3px; border-width: 1px; border-color: #5c5c5c #fff #fff #5c5c5c; }
.tree li { display: flex; height: 16px; line-height: 16px; padding-left: 8px; white-space: nowrap; }
.tree li > * { flex: none; }
.tree.two li { padding-left: 5px; }
.tree li > span:last-child { padding: 0 2px; }
.tree .on { background: #dcdcdc; }
.box { width: 9px; height: 9px; margin-top: 4px; background: #f4f4f4; border: 1px solid #8a8a8a; color: #2a4a9a; font: bold 9px/7px "Liberation Sans", sans-serif; text-align: center; }
.nobox { width: 9px; background: linear-gradient(#777, #777) 4px 0 / 1px 100% no-repeat; opacity: .6; }
.ln { width: 5px; height: 1px; margin-top: 8px; border-top: 1px dotted #666; }
.tree.two .ln { width: 2px; }
.sub .ln { width: 9px; margin-left: 15px; }
.vs { display: flex; flex-direction: column; align-items: center; padding-top: 4px; background: #f0f0f0; color: #555; }
.vs b { width: 15px; height: 20px; margin-top: 3px; background: #cdcdcd; }
.vs svg:last-child { margin-top: auto; margin-bottom: 2px; }
.hs { grid-column: 1 / -1; display: flex; align-items: center; height: 17px; padding: 0 2px; background: #f0f0f0; color: #444; }
.hs b { width: 44px; height: 15px; margin-left: 3px; background: #cdcdcd; }
.tree .hs { padding-right: 20px; }
.plugins { display: flex; flex-direction: column; justify-content: space-between; width: 194px; border: 1px solid #70777f; background: #979797; padding: 0 1px 1px; overflow: hidden; }
.plugins li { height: 15px; line-height: 15px; padding-left: 1px; white-space: nowrap; overflow: hidden; width: 190px; }
.plugins .hs b { width: 17px; }
.volrow { display: flex; align-items: center; justify-content: flex-end; gap: 10px; margin-top: 8px; height: 16px; font: 11px Roboto, sans-serif; color: #fff; }
.volrow input { width: 165px; height: 16px; background: #656565; border: 1px solid #2a2a2a; }
.volrow input::-webkit-slider-thumb { appearance: none; width: 23px; height: 14px; background: linear-gradient(90deg, #9e9e9e 11px, #555 11px 12px, #9e9e9e 12px); }
.pitch { display: flex; align-items: center; height: 19px; margin-top: 9px; font: 11px Roboto, sans-serif; color: #f4f4f4; }
.pitch label { width: 29px; }
.pitch label.rate { width: 29px; margin-left: 9px; }
.knob { width: 17px; height: 17px; border: 1px solid #eee; border-radius: 50%; background: linear-gradient(#eee, #eee) 7px 0 / 1px 7px no-repeat; }
.pitch input { width: 31px; height: 19px; margin-left: 4px; padding-left: 2px; border: 1px solid #f4f4f4; background: #c5c5c5; color: #fff; font-size: 12px; }
.pitch input.r { width: 34px; }
.tempo { display: block; width: 120px; margin-top: 6px; }
.prev { display: flex; height: 20px; margin-top: 5px; }
.prev button { width: 24px; height: 20px; background: #c8c8c8; border: 1px solid #555; border-width: 1px 1px 1px 0; color: #222; }
.prev .io { width: 20px; margin: 0 10px 0 6px; border-width: 1px; border-color: #555; }
.ck { display: flex; align-items: center; gap: 4px; font: 11px Roboto, sans-serif; color: #fff; }
.ck.two { margin-left: 4px; }
.ck input { width: 13px; height: 13px; background: #fff; border: 1px solid #222; }
.ck input:checked { background: #fff url("data:image/svg+xml,%3Csvg xmlns='http://www.w3.org/2000/svg' width='11' height='11'%3E%3Cpath d='M1.500 5.500l3 3 5-6' fill='none' stroke='%23222' stroke-width='1.300'/%3E%3C/svg%3E") no-repeat center; }
.scrub { display: flex; margin-top: 6px; }
.media { flex: 1; height: 17px; margin-top: 5px; border: 1px solid #fff; background: #aaa; }
.spin { width: 17px; margin-right: -2px; }
.spin button { width: 17px; height: 13px; background: #686868; color: #ddd; border-bottom: 1px solid #2a2a2a; }

.bar { display: flex; flex: none; height: 16px; background: #2a2a2a; color: #ddd; }
.bar button, .vbar button, .rv button { width: 17px; height: 16px; background: #686868; color: #ddd; }
.bar .pm, .vbar .pm, .rv .pm { background: none; font: 13px "Liberation Sans", sans-serif; width: 20px; }
.thumb { background: #686868; }
.bar.left { margin: 1px 15px 0 0; }
.bar.left .thumb { margin: 0 1px; }
.nomedia { margin: 6px 0 0 27px; font: 11px/14px Roboto, sans-serif; color: #fff; }

/* tcp */
.tcp { padding: 4px 8px 0 0; }
.tools { display: flex; }
.tools button { width: 30px; height: 24px; background: #b4b4b4; color: #000; }
.tools .on { background: #d8d8d8; }
.pills { display: flex; gap: 15px; height: 38px; padding: 11px 0 0 7px; }
.pills button { width: 15px; height: 15px; border-radius: 8px; background: #a0a0a0; }
.pills .on { background: #dcdcdc; }
.pills .set { width: 28px; margin: 0 -6px; font-weight: normal; font-size: 12px; }
.panel { height: 393px; background: #666; border-bottom: 1px solid #c8c8c8; }
.trk { display: flex; height: 25px; padding-left: 2px; background: #555; border-bottom: 2px solid #555; }
.trk.ret { height: 26px; background: #333; border-bottom-color: #333; border-top: 1px solid #333; }
.lc { display: flex; flex: none; width: 162px; padding: 4px 6px 4px 4px; margin-right: 2px; }
.trk.child { padding-left: 8px; }
.child .lc { width: 156px; }
.child .nm { padding-left: 5px; width: 85px; }
.child .names { width: 85px; }
.rc { width: 182px; padding: 4px 4px 0 6px; background: #8c8c8c; }
.ret .rc { background: #464646; }
.names { width: 91px; margin-right: 6px; }
.nm { display: flex; height: 15px; width: 91px; padding-left: 3px; line-height: 15px; color: #222; white-space: nowrap; overflow: hidden; }
.boxed { background: var(--b); }
.fold { display: flex; align-items: center; justify-content: center; flex: none; width: 15px; height: 15px; margin: 0 8px 0 -2px; border: 1px solid #333; border-radius: 50%; background: #b4b4b4; color: #000; }
.cell { height: 15px; border: 1px solid #3c3c3c; background: #b4b4b4; color: #111; flex: none; }
.sm { width: 25px; }
.lc .pw { margin-left: 5px; }
.lc .off, .hd.off { color: #6a6a6a; }
.ln4 { display: flex; gap: 4px; margin-bottom: 4px; }
.ln4.end { justify-content: flex-end; }
.ln4.spread { justify-content: space-between; }
.cell.num { width: 55px; background: #ffae00; font-size: 12px; color: #2a1c00; }
.cell.num.muted { background: #dcdcdc; color: #222; }
.cell.vol { width: 55px; font-size: 12px; background: linear-gradient(90deg, #54dff8 var(--v), #dcdcdc var(--v)); color: #123; }
.cell.pan { width: 55px; margin-right: -1px; background: #dcdcdc; font-weight: normal; font-size: 12px; }
.cell.route { width: 54px; font-weight: normal; font-size: 12px; justify-content: flex-start; padding-left: 2px; background-color: #dcdcdc; }
.cell.armed { background: #ff553a; }
.cell.cy { background: #54dff8; }
.io3 { display: flex; gap: 2px; width: 55px; }
.io3 .cell { width: 15px; font-weight: normal; font-size: 12px; }
.io3 .cell:nth-child(2) { width: 21px; }
.meter { flex: 1; background: linear-gradient(#161616, #161616) 0 0 / 100% 3px no-repeat, linear-gradient(90deg, #161616 5px, #666 5px 7px, #161616 7px); }
.env { display: block; width: 91px; height: 15px; margin-top: 4px; padding: 0 2px; border: 1px solid #3c3c3c; background: #dcdcdc url("data:image/svg+xml,%3Csvg xmlns='http://www.w3.org/2000/svg' width='9' height='7'%3E%3Cpath d='M0 0h9L4.500 6z'/%3E%3C/svg%3E") no-repeat right 1px center; font: 12px/13px "Liberation Sans", sans-serif; color: #111; }
.env.out, .env.midi { width: 55px; margin: 0; font-size: 11px; }
.env.midi { padding: 0 0 0 1px; font-size: 10px; }
.master { height: 74px; }
.master .lc { background: #808080; }
.fxbox { width: 55px; height: 61px; border: 1px solid #3c3c3c; background: #808080; }
.hd { display: flex; align-items: center; justify-content: space-between; height: 14px; padding: 0 5px; background: #b4b4b4; border-bottom: 1px solid #3c3c3c; }
.hd.off { background: #a8a8a8; }
.ob { height: 16px; margin-top: 4px; border: 1px solid #3c3c3c; border-width: 1px 0; background: #b4b4b4; font: 10px/14px "Liberation Sans", sans-serif; text-align: center; }
.gapline { height: 4px; }
.big { height: 78px; }
.big .rc { background: #a8a8a8; }
.addfx { width: 15px; height: 15px; margin: 16px 0 0 74px; border: 1px solid #333; border-radius: 50%; background: #b4b4b4; }
.cpu { height: 16px; line-height: 17px; color: #fff; white-space: nowrap; }

/* arrange */
.arrange { margin-right: 1px; min-width: 0; }
.strip { background: #3e3e3e; height: 14px; }
.l1 { background: #949494; }
.d2 { height: 11px; }
.ruler { display: block; width: 100%; background: #a8a8a8; overflow: hidden; }
.ruler text { font: bold 12px "Liberation Sans", sans-serif; }
.lanes { display: flex; }
.field-svg { display: block; flex: 1; min-width: 0; overflow: hidden; }
.clip { font: 500 11px Roboto, sans-serif; fill: #2c5a52; }
.vbar { display: flex; flex-direction: column; width: 17px; background: #2a2a2a; }
.vbar button { height: 17px; }
.vthumb { height: 284px; margin-top: 1px; background: #686868; }
.vbar .pm, .rv .pm { width: 17px; height: 19px; }
.bar.arr { height: 17px; margin-right: 17px; border-top: 1px solid #222; }
.arr .pre { width: 124px; }
.arr .thumb { width: 49%; }

/* editor */
.etools { display: flex; height: 43px; padding: 13px 2px 0 0; }
.tg { display: flex; height: 24px; margin-top: -2px; }
.tg button { width: 30px; height: 24px; background: #b4b4b4; color: #000; }
.tg .on { background: #dcdcdc; }
.tg .dk { background: #a0a0a0; }
.tg .big { font-size: 19px; font-weight: bold; }
.tg .two { white-space: normal; line-height: 9px; }
.g2, .g3 { margin-left: 15px; }
.lb { width: 32px; color: #fff; font: 11px/21px Roboto, sans-serif; }
.lb.g { margin-left: 59px; width: 31px; }
.lb.n { margin-left: 10px; width: 39px; }
.lb.c { margin-left: 15px; width: 35px; }
.w61 { width: 61px; margin-right: 5px; }
.w60 { width: 60px; }
.w52 { width: 52px; }
.w83 { width: 83px; }
.w89 { width: 89px; margin-left: 3px; }
.snap { height: 19px; margin-left: 15px; }
.ebody { display: flex; padding-left: 2px; }
.roll { flex: 1; min-width: 0; }
.rmain { display: flex; height: 400px; }
.keyboard { display: block; flex: none; }
.keyboard text { font: 11px "Liberation Sans", sans-serif; fill: #333; }
.grid { display: block; flex: 1; min-width: 0; overflow: hidden; }
.measure { fill: #4a4a4a; }
.beat { fill: #808080; }
.eighth { fill: #ababab; }
.ms { font: bold 11px "Liberation Sans", sans-serif; fill: #a8a8a8; }
.bt { font: 10px "Liberation Sans", sans-serif; fill: #a8a8a8; text-anchor: middle; }
.nt { font: 10px "Liberation Sans", sans-serif; fill: #f4cfcf; }
.nt.sel { fill: #123; }
.rv { display: flex; flex-direction: column; width: 17px; margin-top: 64px; background: #2a2a2a; }
.rv button { height: 17px; }
.rv .a { height: 127px; }
.rv .b { height: 59px; background: #686868; }
.bot { margin: 1px 17px 0 79px; }
.bot .thumb { width: 225px; margin-left: 1px; }
.tlist { width: 189px; padding: 0 2px 0 4px; border-left: 2px solid #222; margin-left: 1px; }
.trow { display: flex; align-items: center; height: 18px; border: 1px solid #333; background: #5a5a5a; padding-left: 3px; }
.tn { width: 42px; margin-left: 4px; font: 11px Roboto, sans-serif; color: #d8d8d8; white-space: nowrap; overflow: hidden; }
.sw { width: 12px; height: 12px; margin-right: 2px; background: #1ee8c3; }
.trow button { flex: 1; height: 16px; background: #6a6a6a; border-left: 1px solid #3a3a3a; }
.trow .lt { background: #ddd; }
.trow .rd { background: #8a0000; color: #e08a00; }
.trow .fa { color: #8a8a8a; font-weight: normal; }

.foot { display: flex; height: 15px; background: #727272; }
.btab { width: 123px; height: 14px; gap: 4px; background: #c4c4c4; clip-path: polygon(0 0, 100% 0, 115px 100%, 8px 100%); font-size: 10px; }
.btab i { width: 10px; height: 10px; border: 1px solid #222; font: 9px/7px "Liberation Sans", sans-serif; }
</style>
